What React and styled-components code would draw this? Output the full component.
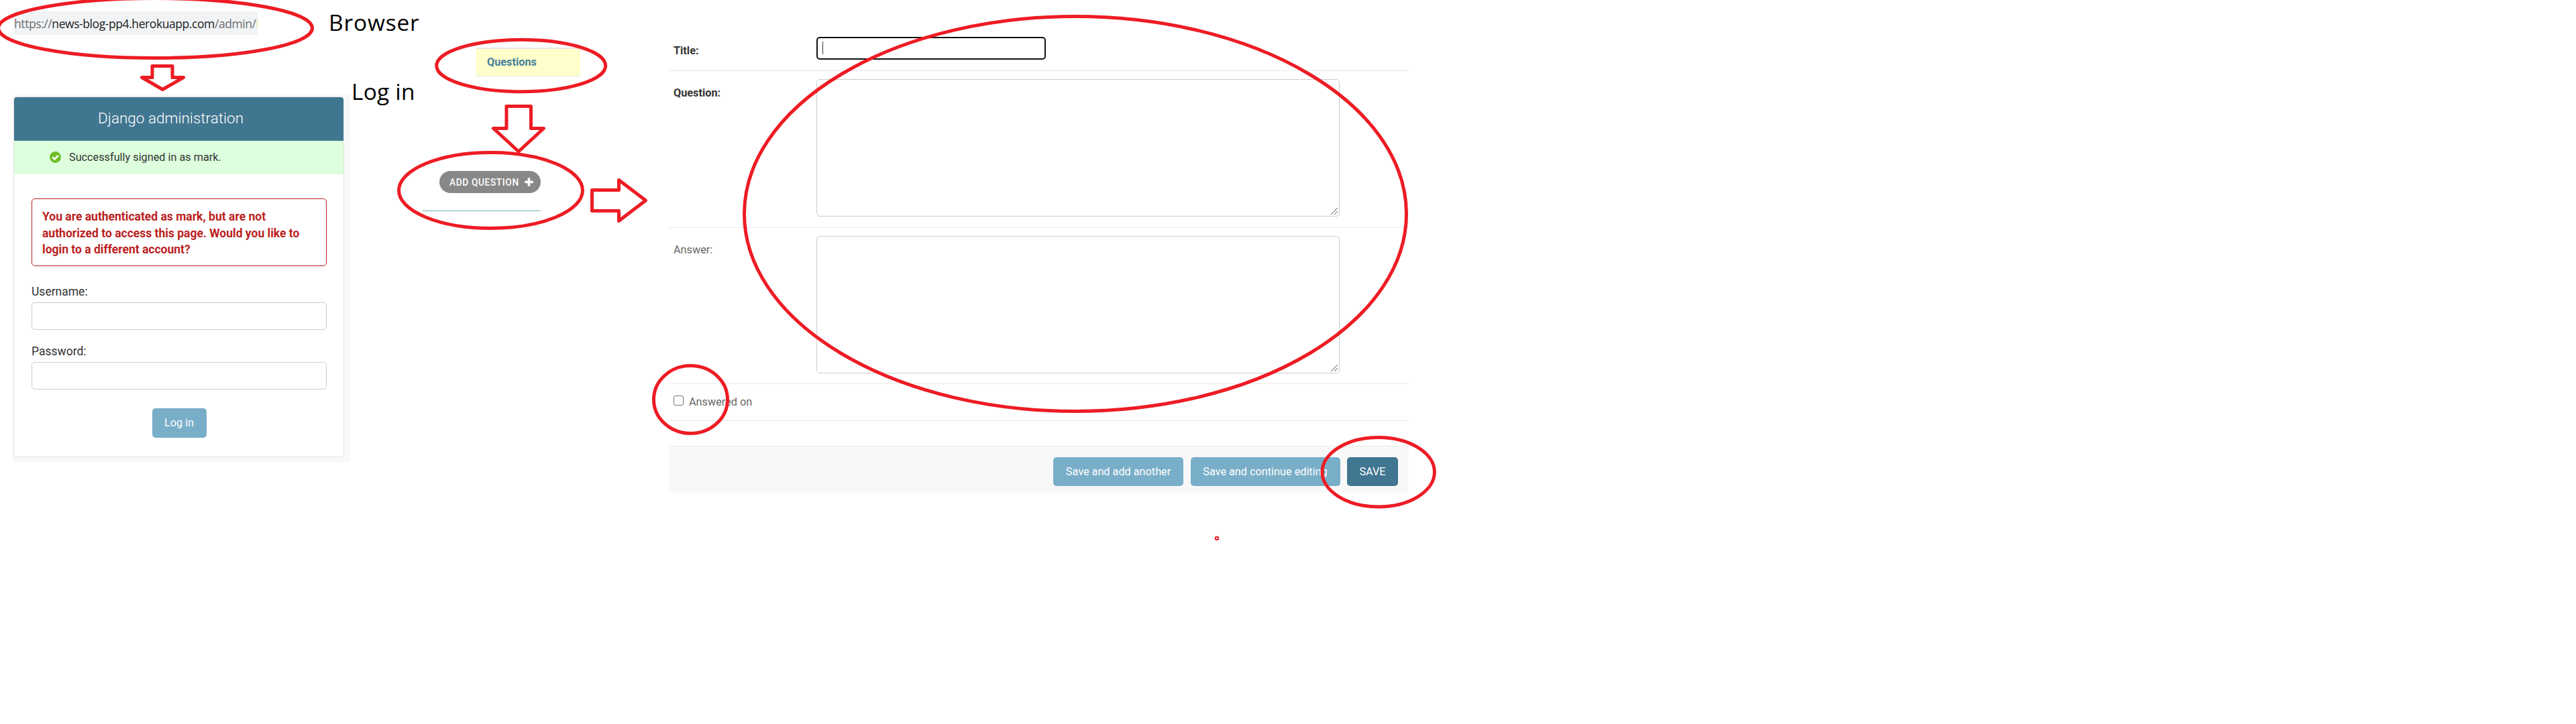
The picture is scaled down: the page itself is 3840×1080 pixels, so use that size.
import React from "react";
import styled, { createGlobalStyle } from "styled-components";

const Global = createGlobalStyle`
  *, *::before, *::after { box-sizing: border-box; }
  body { margin: 0; background: #fff; }
`;

const Page = styled.main`
  position: relative;
  display: flex;
  align-items: flex-start;
  width: 3840px;
  height: 1080px;
  overflow: hidden;
  background: #fff;
  color: #333;
  font-family: Roboto, "Liberation Sans", sans-serif;
  font-size: 16.25px;
`;

const LoginColumn = styled.section`
  flex: none;
  width: 503px;
  margin: 17px 0 0 19px;
`;

const UrlBar = styled.div`
  width: 364px;
  height: 35px;
  margin-left: 1px;
  padding-left: 1px;
  background: linear-gradient(#fbdc9a, #fbdc9a) right 11px / 1px 14px no-repeat #f1f3f4;
  color: #6b6e72;
  font: 17.5px/36px "Open Sans", "Noto Sans", sans-serif;
  letter-spacing: ${(p) => p.$tracking}px;
  white-space: nowrap;
`;

const Host = styled.span`
  color: #202124;
`;

const LoginArea = styled.div`
  height: 548px;
  margin-top: 89px;
  padding: 3px 9px 7px 1px;
  background: #f8f8f8;
`;

const Card = styled.div`
  height: 538px;
  border: 1px solid #e6e6e6;
  border-radius: 5px;
  overflow: hidden;
  background: #fff;
`;

const CardHeader = styled.header`
  height: 65px;
  padding-left: 125px;
  background: #417690;
  color: #fff;
  font-size: 22.5px;
  font-weight: 300;
  line-height: 62px;
`;

const Success = styled.div`
  display: flex;
  align-items: center;
  gap: 12.5px;
  height: 50px;
  padding: 0 0 1px 52.5px;
  background: #dfd;

  svg { flex: none; }
`;

const CardBody = styled.div`
  display: flex;
  flex-direction: column;
  padding: 36px 25px 0 26px;
`;

const ErrorNote = styled.p`
  height: 101px;
  margin: 0 0 27px;
  padding: 14px 0 0 15px;
  border: 1px solid #ba2121;
  border-radius: 5px;
  color: #ba2121;
  font-size: 17.5px;
  font-weight: 700;
  line-height: 24.5px;
  white-space: nowrap;
`;

const FieldLabel = styled.label`
  height: 27px;
  font-size: 17.5px;
  line-height: 23px;
`;

const LoginInput = styled.input`
  width: 440px;
  height: 41px;
  margin: 0 0 ${(p) => p.$after}px;
  border: 1px solid #ccc;
  border-radius: 5px;
  background: #fff;
`;

const Button = styled.button`
  width: ${(p) => p.$width}px;
  height: ${(p) => p.$height || 43}px;
  padding: 0;
  border: 0;
  border-radius: 5px;
  background: ${(p) => (p.$primary ? "#417690" : "#79aec8")};
  color: #fff;
  font: 16.25px/20px Roboto, "Liberation Sans", sans-serif;
  white-space: nowrap;
`;

const CenteredRow = styled.div`
  display: flex;
  justify-content: center;
`;

const MiddleColumn = styled.section`
  flex: none;
  display: flex;
  flex-direction: column;
  width: 235px;
  margin: 71px 0 0 108px;
`;

const MenuItem = styled.div`
  align-self: flex-end;
  width: 155px;
  height: 43px;
  padding-left: 16px;
  border-top: 2px solid #e8e8e8;
  border-bottom: 1px solid #eaeaea;
  background: #ffc;
  color: #447e9b;
  font-weight: 700;
  line-height: 39px;
`;

const AddArea = styled.div`
  display: flex;
  justify-content: flex-end;
  width: 176px;
  height: 74px;
  margin-top: 127px;
  padding-top: 14px;
  border-bottom: 1px solid #79aebb;
`;

const AddPill = styled.a`
  display: flex;
  align-items: center;
  justify-content: space-between;
  width: 151px;
  height: 33px;
  padding: 0 11px 0 15px;
  border-radius: 17px;
  background: #888;
  color: #fff;
  font-size: 13.75px;
  font-weight: 500;
  letter-spacing: 0.6px;
  white-space: nowrap;
`;

const FormColumn = styled.section`
  flex: none;
  width: 1102px;
  margin: 42px 0 0 132px;
`;

const FormRow = styled.div`
  display: flex;
  align-items: flex-start;
  height: ${(p) => p.$height}px;
  padding: ${(p) => p.$top || 12}px 0 0 7px;
  border-bottom: 1px solid #e8e8e8;
`;

const RowLabel = styled.label`
  flex: none;
  width: 213px;
  padding-top: 11px;
  color: ${(p) => (p.$required ? "#333" : "#666")};
  font-weight: ${(p) => (p.$required ? 700 : 400)};
  line-height: 20px;
`;

const TitleInput = styled.div`
  width: 342px;
  height: 34px;
  padding: 5px 7px;
  border: 2px solid #101010;
  border-radius: 5px;
`;

const Caret = styled.div`
  width: 1px;
  height: 19px;
  background: #333;
`;

const TextBox = styled.div`
  display: flex;
  align-items: flex-end;
  justify-content: flex-end;
  width: 780px;
  height: 205px;
  padding: 2px;
  border: 1px solid #ccc;
  border-radius: 5px;
`;

const CheckBox = styled.span`
  width: 15px;
  height: 15px;
  border: 1px solid #767676;
  border-radius: 3px;
  background: #fff;
`;

const CheckLabel = styled.label`
  margin-left: 8px;
  color: #666;
  line-height: 20px;
`;

const SubmitRow = styled.div`
  display: flex;
  justify-content: flex-end;
  gap: 10.5px;
  height: 70px;
  margin-top: 37px;
  padding: 16px 15px 0 0;
  border-top: 1px solid #e8e8e8;
  background: #f8f8f8;
`;

const Note = styled.div`
  position: absolute;
  left: ${(p) => p.$x}px;
  top: ${(p) => p.$y}px;
  color: #000;
  font: 33.5px/40px "Open Sans", "Noto Sans", sans-serif;
  letter-spacing: ${(p) => p.$tracking || 0}px;
  white-space: nowrap;
`;

const Markup = styled.svg`
  position: absolute;
  left: 0;
  top: 0;
  pointer-events: none;
`;

const CheckIcon = () => (
  <svg width="17" height="17" viewBox="0 0 17 17">
    <circle cx="8.5" cy="8.5" r="8.5" fill="#70bf2b" />
    <path d="M4.2 8.4 7.4 11.5 12.8 6" fill="none" stroke="#fff" strokeWidth="2.5" />
  </svg>
);

const PlusIcon = () => (
  <svg width="13" height="13" viewBox="0 0 13 13">
    <path d="M6.5 0.3V12.7M0.3 6.5H12.7" stroke="#fff" strokeWidth="3.6" />
  </svg>
);

const Grip = () => (
  <svg width="10" height="10" viewBox="0 0 10 10">
    <path d="M0 10 10 0M5 10 10 5" stroke="#555" strokeWidth="1" />
  </svg>
);

const ellipses = [
  [231.5, 42, 234, 44.5],
  [776.7, 98, 126, 38.7],
  [731.5, 284, 137, 56.5],
  [1603, 319, 493.5, 294.5],
  [1029.5, 596, 55, 50.5],
  [2054.7, 704.2, 83.7, 51.7],
];

const arrows = [
  "M227 98.5H257V115.5H273.5L242.4 133.5 211.5 115.5H227Z",
  "M755 158.5H791.5V191.5H810.5L773 226 735.5 191.5H755Z",
  "M882.5 283.5H922.5V268.5L962.5 299 922.5 329.5V314.5H882.5Z",
];

export default function App() {
  return (
    <Page>
      <Global />
      <LoginColumn>
        <UrlBar $tracking={-0.42}>
          https://<Host>news-blog-pp4.herokuapp.com</Host>/admin/
        </UrlBar>
        <LoginArea>
          <Card>
            <CardHeader>Django administration</CardHeader>
            <Success>
              <CheckIcon />
              Successfully signed in as mark.
            </Success>
            <CardBody>
              <ErrorNote>
                You are authenticated as mark, but are not<br />
                authorized to access this page. Would you like to<br />
                login to a different account?
              </ErrorNote>
              <FieldLabel>Username:</FieldLabel>
              <LoginInput $after={21} />
              <FieldLabel>Password:</FieldLabel>
              <LoginInput $after={28} />
              <CenteredRow>
                <Button $width={81} $height={44}>Log in</Button>
              </CenteredRow>
            </CardBody>
          </Card>
        </LoginArea>
      </LoginColumn>

      <MiddleColumn>
        <MenuItem>Questions</MenuItem>
        <AddArea>
          <AddPill>
            ADD QUESTION
            <PlusIcon />
          </AddPill>
        </AddArea>
      </MiddleColumn>

      <FormColumn>
        <FormRow $height={64} $top={13}>
          <RowLabel $required>Title:</RowLabel>
          <TitleInput><Caret /></TitleInput>
        </FormRow>
        <FormRow $height={234}>
          <RowLabel $required>Question:</RowLabel>
          <TextBox><Grip /></TextBox>
        </FormRow>
        <FormRow $height={233}>
          <RowLabel>Answer:</RowLabel>
          <TextBox><Grip /></TextBox>
        </FormRow>
        <FormRow $height={55} $top={17}>
          <CheckBox />
          <CheckLabel>Answered on</CheckLabel>
        </FormRow>
        <SubmitRow>
          <Button $width={194}>Save and add another</Button>
          <Button $width={223}>Save and continue editing</Button>
          <Button $width={76} $primary>SAVE</Button>
        </SubmitRow>
      </FormColumn>

      <Note $x={490} $y={13} $tracking={0.8}>Browser</Note>
      <Note $x={524} $y={115.5} $tracking={0.2}>Log in</Note>

      <Markup width="3840" height="1080" viewBox="0 0 3840 1080">
        <g fill="none" stroke="#ed1c24" strokeWidth="5" strokeLinejoin="round">
          {ellipses.map(([cx, cy, rx, ry]) => (
            <ellipse key={cx} cx={cx} cy={cy} rx={rx} ry={ry} />
          ))}
          {arrows.map((d) => (
            <path key={d} d={d} />
          ))}
          <circle cx="1814" cy="803" r="2.2" strokeWidth="2" />
        </g>
      </Markup>
    </Page>
  );
}
